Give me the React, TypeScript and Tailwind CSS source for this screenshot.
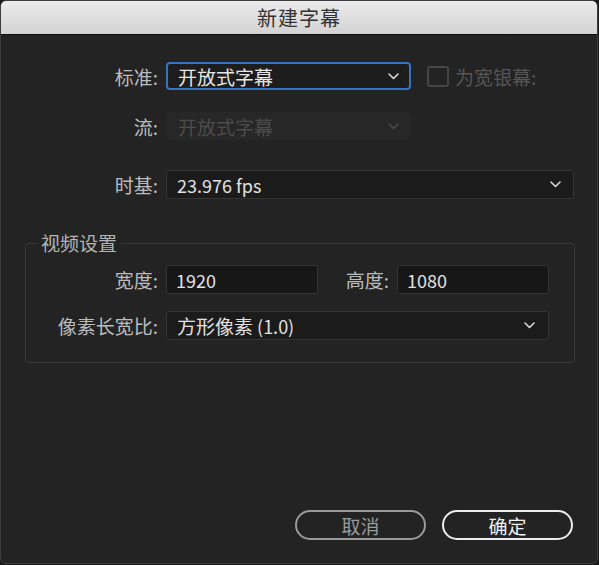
import React from 'react'

const FONT = { fontFamily: '"Noto Sans CJK SC", "Noto Sans", sans-serif' }

// small chevron used by the dropdowns
const Chevron = ({ dim = false }: { dim?: boolean }) => (
  <svg width="11" height="7" viewBox="0 0 11 7" fill="none">
    <polyline
      points="1,1 5.5,5.5 10,1"
      stroke={dim ? '#4a4a4a' : '#d6d6d6'}
      strokeWidth="1.6"
      strokeLinecap="round"
      strokeLinejoin="round"
    />
  </svg>
)

export default function App() {
  return (
    <div className="w-[599px] h-[565px] bg-[#1a1a1a]" style={FONT}>
      <div className="w-[598px] h-[564px] flex flex-col overflow-hidden rounded-md border border-[#3d3d3d] bg-[#232323]">
        {/* Title bar */}
        <div className="h-[34px] shrink-0 flex items-center justify-center bg-gradient-to-b from-[#ebebeb] to-[#d3d3d3] border-b border-[#0f0f0f]">
          <span className="text-[20px] leading-none text-[#333333] tracking-[1px]">新建字幕</span>
        </div>

        <div className="flex flex-col pt-[27px]">
          {/* 标准 */}
          <div className="flex items-center h-[28px]">
            <div className="w-[165px] pr-[8px] text-right text-[19px] leading-none text-[#bcbcbc]">标准:</div>
            <div className="w-[245px] h-[28px] flex items-center justify-between pl-[10px] pr-[10px] rounded-[4px] border-2 border-[#3474c6] bg-[#1d1d1d]">
              <span className="text-[19px] leading-none text-[#e6e6e6]">开放式字幕</span>
              <Chevron />
            </div>
            <div className="ml-[16px] w-[22px] h-[21px] rounded-[3px] border-2 border-[#454545]" />
            <span className="ml-[6px] text-[19px] leading-none text-[#555555]">为宽银幕:</span>
          </div>

          {/* 流 */}
          <div className="flex items-center h-[28px] mt-[22px]">
            <div className="w-[165px] pr-[8px] text-right text-[19px] leading-none text-[#bcbcbc]">流:</div>
            <div className="w-[245px] h-[28px] flex items-center justify-between pl-[12px] pr-[12px] rounded-[4px] bg-[#272727]">
              <span className="text-[19px] leading-none text-[#4c4c4c]">开放式字幕</span>
              <Chevron dim />
            </div>
          </div>

          {/* 时基 */}
          <div className="flex items-center h-[29px] mt-[30px]">
            <div className="w-[165px] pr-[8px] text-right text-[19px] leading-none text-[#bcbcbc]">时基:</div>
            <div className="w-[408px] h-[29px] flex items-center justify-between pl-[10px] pr-[12px] rounded-[3px] border border-[#343434] bg-[#1b1b1b]">
              <span className="text-[18px] leading-none text-[#e2e2e2]">23.976 fps</span>
              <Chevron />
            </div>
          </div>

          {/* 视频设置 */}
          <fieldset className="ml-[24px] mt-[34px] w-[550px] h-[130px] rounded-[4px] border border-[#383838] px-0 pb-0">
            <legend className="ml-[11px] px-[4px] text-[19px] leading-[20px] text-[#b4b4b4]">视频设置</legend>
            <div className="flex items-center h-[29px] mt-[12px]">
              <div className="w-[140px] pr-[8px] text-right text-[19px] leading-none text-[#bcbcbc]">宽度:</div>
              <div className="w-[152px] h-[29px] flex items-center pl-[9px] rounded-[3px] border border-[#343434] bg-[#171717]">
                <span className="text-[18px] leading-none text-[#e2e2e2]">1920</span>
              </div>
              <div className="w-[79px] pr-[8px] text-right text-[19px] leading-none text-[#bcbcbc]">高度:</div>
              <div className="w-[152px] h-[29px] flex items-center pl-[9px] rounded-[3px] border border-[#343434] bg-[#171717]">
                <span className="text-[18px] leading-none text-[#e2e2e2]">1080</span>
              </div>
            </div>
            <div className="flex items-center h-[29px] mt-[17px]">
              <div className="w-[140px] pr-[8px] text-right text-[19px] leading-none text-[#bcbcbc]">像素长宽比:</div>
              <div className="w-[383px] h-[29px] flex items-center justify-between pl-[10px] pr-[13px] rounded-[3px] border border-[#343434] bg-[#1b1b1b]">
                <span className="leading-none text-[#e2e2e2]">
                  <span className="text-[19px]">方形像素</span>
                  <span className="text-[18px]"> (1.0)</span>
                </span>
                <Chevron />
              </div>
            </div>
          </fieldset>

          {/* Buttons */}
          <div className="flex justify-end gap-[16px] pr-[24px] mt-[147px]">
            <button className="w-[131px] h-[30px] rounded-full border-2 border-[#9a9a9a] text-[19px] leading-none text-[#9a9a9a]">
              取消
            </button>
            <button className="w-[131px] h-[30px] rounded-full border-2 border-[#ececec] text-[19px] leading-none text-[#f2f2f2]">
              确定
            </button>
          </div>
        </div>
      </div>
    </div>
  )
}
